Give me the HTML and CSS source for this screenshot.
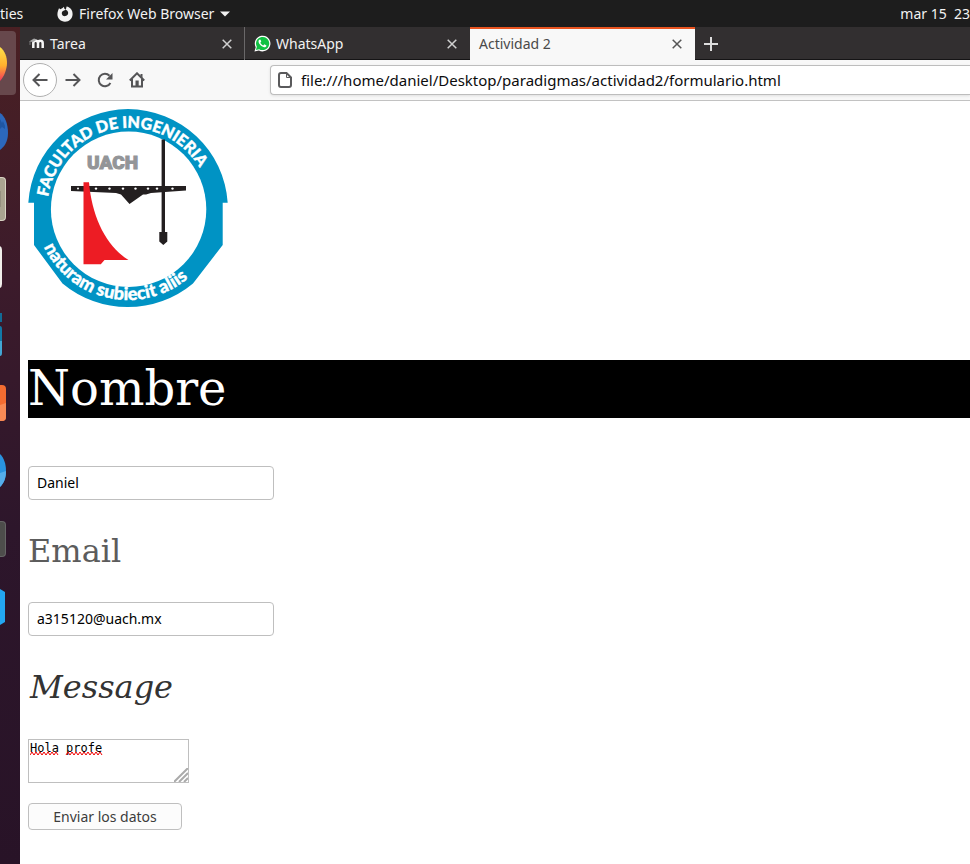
FILE: index.html
```html
<!DOCTYPE html>
<html lang="es">
<head>
<meta charset="utf-8">
<title>Actividad 2</title>
<link rel="stylesheet" href="styles.css">
</head>
<body>
<header class="topbar">
  <span class="activities">ties</span>
  <button class="app-menu" type="button">
    <svg width="16" height="16" viewBox="0 0 16 16" aria-hidden="true"><path fill="#f2f2f2" d="M1.2 4.2 2 2.2l1.4 1L5.6 2 7 .8l.2 1.7 1.6 1.3-2.3.9c-1.3.6-2 1.800-1.600 3.200.4 1.700 2 2.500 3.600 2.200 1.900-.3 3-2 2.600-3.800-.3-1.400-1.200-2.100-2.300-2.600L9.600 .6C13.300 1.200 15.700 4.300 15.600 8.200 15.500 12.500 12.200 15.700 8 15.700S.4 12.500.4 8.300c0-1.500.3-2.800.8-4.100z"/></svg>
    <span>Firefox Web Browser</span>
    <svg width="10" height="6" viewBox="0 0 10 6" aria-hidden="true"><path fill="#f2f2f2" d="M0 .5h10L5 5.500z"/></svg>
  </button>
  <span class="clock">mar 15&nbsp; 23</span>
</header>
<div class="desktop">
  <nav class="dock" aria-label="Dock">
    <button class="slot active" type="button" aria-label="Firefox"><svg viewBox="0 0 16 64"><defs><linearGradient id="fx" x1="0" y1="0" x2="0" y2="1"><stop offset="0" stop-color="#ffe14a"/><stop offset=".55" stop-color="#ffb02e"/><stop offset="1" stop-color="#f5365c"/></linearGradient></defs><path fill="url(#fx)" d="M0 16c5 4 7 10 7 16S4 46 0 50z"/></svg></button>
    <button class="slot" type="button" aria-label="Thunderbird"><svg viewBox="0 0 16 64"><path fill="#2c68bd" d="M0 14c5 3 8 11 8 20S4 48 0 51z"/><path fill="#1f56a3" d="M0 20l2 4 1-2 2 5v3l-3-2-2 2z"/></svg></button>
    <button class="slot" type="button" aria-label="Archivos"><svg viewBox="0 0 16 64"><path fill="#d8d3c3" d="M0 10h2q4 0 4 4v36q0 4-4 4H0z"/><path fill="#aaa491" d="M0 11h2q3 0 3 3v36q0 3-3 3H0z"/><path fill="#969080" d="M0 24h1v16H0z"/></svg></button>
    <button class="slot" type="button" aria-label="Rhythmbox"><svg viewBox="0 0 16 64"><path fill="#f1efeb" d="M0 11q2 1 2 4v34q0 3-2 4z"/></svg></button>
    <button class="slot" type="button" aria-label="Writer"><svg viewBox="0 0 16 64"><path fill="#126b96" d="M0 10h2v9H0z"/><path fill="#1279a8" d="M0 23q2 0 2 3v13H0z"/><path fill="#42a6d4" d="M0 38h2v12q0 3-2 3z"/></svg></button>
    <button class="slot" type="button" aria-label="Software"><svg viewBox="0 0 16 64"><path fill="#f36c31" d="M0 14h2q4 0 4 4v28q0 4-4 4H0z"/><path fill="#f78a55" d="M0 34l6-2v14q0 4-4 4H0z"/></svg></button>
    <button class="slot" type="button" aria-label="Ayuda"><svg viewBox="0 0 16 64"><path fill="#2993df" d="M0 15c4 4 6 10 6 17s-2 12-6 16z"/><path fill="#55adea" d="M0 34l6-2c0 7-2 12-6 16z"/></svg></button>
    <button class="slot" type="button" aria-label="Terminal"><svg viewBox="0 0 16 64"><path fill="#666" d="M0 14h2q4 0 4 4v28q0 4-4 4H0z"/><path fill="#4d4d4b" d="M0 15h2q3 0 3 3v28q0 3-3 3H0z"/></svg></button>
    <button class="slot" type="button" aria-label="Visual Studio Code"><svg viewBox="0 0 16 64"><path fill="#23a7f2" d="M0 14l5 3v30l-5 3z"/></svg></button>
  </nav>
  <div class="browser">
    <div class="tabs">
      <div class="tab">
        <svg class="favicon" width="16" height="16" viewBox="0 0 16 16" aria-hidden="true"><path fill="none" stroke="#f5f5f5" stroke-width="2.500" d="M4.300 12V7.200c0-3.200 4.700-3.200 4.700 0V12M9 7.200c0-3.200 4.700-3.200 4.700 0V12"/><path fill="#aaa" d="M0 5.500 5 2.500l3 1-4 2.500z"/><path stroke="#777" d="M1 5.500V9"/></svg>
        <button class="tab-title" type="button">Tarea</button>
        <button class="close" type="button" aria-label="Cerrar Tarea"><svg width="10" height="10" viewBox="0 0 10 10"><path d="M.7.7l8.600 8.600M9.300.7.7 9.300"/></svg></button>
      </div>
      <div class="tab">
        <svg class="favicon" width="17" height="17" viewBox="0 0 18 18" aria-hidden="true"><path fill="#fff" d="M.5 17.500l1.300-4.500A8.300 8.300 0 1 1 5.200 16.400z"/><path fill="#10c143" d="M2 16l1-3.600A7 7 0 1 1 5.500 15z"/><path fill="#fff" d="M6.300 4.800c-.7 0-1.600.9-1.500 2.200.2 2.700 3.400 5.800 6.200 6 1.200 0 2.300-.9 2.200-2l-2.200-1.200-1.200 1.300c-1.500-.6-2.500-1.600-3.100-2.900l1-1.200-.8-2.100z"/></svg>
        <button class="tab-title" type="button">WhatsApp</button>
        <button class="close" type="button" aria-label="Cerrar WhatsApp"><svg width="10" height="10" viewBox="0 0 10 10"><path d="M.7.7l8.600 8.600M9.300.7.7 9.300"/></svg></button>
      </div>
      <div class="tab current">
        <button class="tab-title" type="button">Actividad 2</button>
        <button class="close" type="button" aria-label="Cerrar Actividad 2"><svg width="10" height="10" viewBox="0 0 10 10"><path d="M.7.7l8.600 8.600M9.300.7.7 9.300"/></svg></button>
      </div>
      <button class="new-tab" type="button" aria-label="Nueva pestaña"><svg width="14" height="14" viewBox="0 0 14 14"><path stroke="#ddd" stroke-width="2" d="M7 0v14M0 7h14"/></svg></button>
    </div>
    <div class="toolbar">
      <button class="tool back" type="button" aria-label="Atrás"><svg width="16" height="16" viewBox="0 0 16 16"><path d="M15.500 8H1.500M7.500 2 1.500 8l6 6"/></svg></button>
      <button class="tool" type="button" aria-label="Adelante"><svg width="16" height="16" viewBox="0 0 16 16"><path d="M.5 8h14M8.500 2l6 6-6 6"/></svg></button>
      <button class="tool" type="button" aria-label="Recargar"><svg width="16" height="16" viewBox="0 0 16 16"><path d="M13.400 11A6.200 6.200 0 1 1 12.500 3.800"/><path class="solid" d="M15.500 1v6.500H9z"/></svg></button>
      <button class="tool" type="button" aria-label="Inicio"><svg width="16" height="16" viewBox="0 0 16 16"><path d="M.8 8.500 8 1.300l7.200 7.200M3 7v7.500h10V7"/><path class="solid" d="M6.500 8.500h3.200v5.500H6.500z"/><path class="solid" d="M11.500 2h2v4l-2-2z"/></svg></button>
      <div class="urlbar">
        <svg width="14" height="16" viewBox="0 0 14 16" aria-hidden="true"><path fill="none" stroke="#5a5a5c" stroke-width="2" d="M3 1h5.500L13 5.500V13a2 2 0 0 1-2 2H3a2 2 0 0 1-2-2V3a2 2 0 0 1 2-2z"/><path fill="none" stroke="#5a5a5c" stroke-width="1" d="M8.500 1v4.500H13"/></svg>
        <input type="text" aria-label="Dirección" value="file:///home/daniel/Desktop/paradigmas/actividad2/formulario.html">
      </div>
    </div>
    <main class="page">
      <svg class="logo" width="200" height="200" viewBox="0 0 200 200" role="img" aria-label="Facultad de Ingeniería UACH">
        <defs>
          <path id="arc-top" d="M20 88A82 82 0 0 1 182 88"/>
          <path id="arc-bottom" d="M16 138A93 93 0 0 0 184 138"/>
        </defs>
        <path fill="#0093c4" d="M.3 93.700A99.900 99.900 0 0 1 199.700 93.700H194.700V136L165 174.500A102 102 0 0 1 34.500 174.500L6 136V93.700z"/>
        <circle cx="100.600" cy="100.300" r="77.700" fill="#fff"/>
        <path fill="#231f20" d="M133.600 30.500h3.400V123h2.300v9.500l-4 3.500-4-3.500V123h2.300z"/>
        <path fill="#231f20" d="M43 77h115v4.500l-35 2.500-5 1.500h-3l-13.500 9.500L93 85.500 88 84l-45-2z"/>
        <g fill="#fff"><circle cx="68" cy="79.600" r="1.200"/><circle cx="81.500" cy="79.600" r="1.200"/><circle cx="95" cy="79.600" r="1.200"/><circle cx="107.500" cy="79.600" r="1.200"/><circle cx="120" cy="79.600" r="1.200"/><circle cx="129" cy="79.600" r="1.200"/><circle cx="144.500" cy="79.600" r="1.200"/><circle cx="50" cy="79.600" r="1"/></g>
        <path fill="#ed1c24" d="M55.500 73.300h5.500C64 108 78 137 100.500 151H76.500l-3.700 4.300H55.500z"/>
        <text class="uach" x="59" y="60">UACH</text>
        <text class="motto"><textPath href="#arc-top">FACULTAD DE INGENIERIA</textPath></text>
        <text class="motto latin"><textPath href="#arc-bottom">naturam subiecit aliis</textPath></text>
      </svg>
      <form>
        <p class="nombre"><label for="nombre">Nombre</label></p>
        <input class="field" id="nombre" type="text" value="Daniel">
        <p class="email"><label for="email">Email</label></p>
        <input class="field" id="email" type="email" value="a315120@uach.mx">
        <p class="message"><label for="message">Message</label></p>
        <div class="message-box">
          <textarea id="message" spellcheck="false">Hola profe</textarea>
          <svg class="squiggle" width="73" height="5" viewBox="0 0 73 5" aria-hidden="true"><path d="M0 4l2-3 2 3 2-3 2 3 2-3 2 3 2-3 2 3 2-3 2 3 2-3 2 3 2-3 2 3M36 4l2-3 2 3 2-3 2 3 2-3 2 3 2-3 2 3 2-3 2 3 2-3 2 3 2-3 2 3 2-3 2 3 2-3 2 3"/></svg>
          <svg class="grip" width="14" height="14" viewBox="0 0 14 14" aria-hidden="true"><path d="M0 14 14 0M5 14l9-9M10 14l4-4"/></svg>
        </div>
        <button class="submit" type="button">Enviar los datos</button>
      </form>
    </main>
  </div>
</div>
</body>
</html>
```
FILE: styles.css
```css
* { box-sizing: border-box; }

body {
  margin: 0;
  min-height: 100vh;
  display: flex;
  flex-direction: column;
  overflow-x: hidden;
  background: #fff;
  font-family: "Noto Sans", sans-serif;
  font-size: 14px;
}

button {
  margin: 0;
  padding: 0;
  border: 0;
  background: none;
  color: inherit;
  font: inherit;
}

svg { display: block; flex: none; }

.topbar {
  display: flex;
  align-items: center;
  height: 27px;
  background: #1d1d1d;
  color: #f2f2f2;
  white-space: nowrap;
}

.activities { width: 57px; }

.app-menu {
  display: flex;
  align-items: center;
  gap: 6px;
}

.clock { margin-left: auto; }

.desktop {
  flex: 1;
  display: flex;
}

.dock {
  flex: none;
  display: flex;
  flex-direction: column;
  gap: 4px;
  width: 20px;
  padding-top: 4px;
  background: linear-gradient(#4a2023, #3c1b2b 30%, #2d162b 60%, #281327);
}

.slot {
  width: 16px;
  height: 64px;
}

.slot svg {
  width: 16px;
  height: 64px;
}

.active {
  border-radius: 0 4px 4px 0;
  background: #67484c;
}

.browser {
  flex: 1;
  min-width: 0;
  display: flex;
  flex-direction: column;
}

.tabs {
  display: flex;
  height: 33px;
  background: #322f30;
  box-shadow: inset 0 -1px #151415;
  color: #f2f2f2;
}

.tab {
  flex: 0 1 225px;
  display: flex;
  align-items: center;
  gap: 5px;
  padding: 0 13px 0 9px;
}

.tab:first-child { border-right: 1px solid #6a6869; padding-right: 12px; }

.tab-title {
  flex: 1;
  text-align: left;
}

.close svg {
  fill: none;
  stroke: #d0d0d0;
  stroke-width: 1.5;
}

.current {
  background: #f8f8f8;
  box-shadow: inset 0 2px #e95420;
  color: #4a4a4a;
}

.current .close svg { stroke: #555; }

.new-tab { padding: 0 9px; }

.toolbar {
  display: flex;
  align-items: center;
  height: 41px;
  padding-left: 3px;
  border-bottom: 1px solid #c2c2c2;
  background: #f8f8f8;
}

.tool {
  display: grid;
  place-items: center;
  width: 32px;
  height: 34px;
}

.tool svg {
  fill: none;
  stroke: #555557;
  stroke-width: 2;
}

.tool .solid {
  fill: #555557;
  stroke: none;
}

.back {
  width: 34px;
  border: 1px solid #b0b0b0;
  border-radius: 50%;
  background: #fff;
}

.urlbar {
  flex: 1;
  display: flex;
  align-items: center;
  gap: 9px;
  height: 30px;
  margin-left: 117px;
  padding-left: 7px;
  border: 1px solid #bdbdbd;
  border-right: 0;
  border-radius: 4px 0 0 4px;
  background: #fff;
  box-shadow: 0 1px 3px #0000001a;
}

.urlbar input {
  flex: 1;
  min-width: 0;
  padding: 0;
  border: 0;
  outline: 0;
  background: none;
  color: #0c0c0d;
  font: inherit;
  font-size: 15px;
}

.page {
  flex: 1;
  padding: 8px 0 8px 8px;
  background: #fff;
}

.motto {
  fill: #fff;
  stroke: #fff;
  stroke-width: 0.4;
  font-family: Lato, sans-serif;
  font-size: 16px;
  font-weight: 900;
}

.latin { font-size: 18px; }

.uach {
  fill: #939598;
  stroke: #939598;
  font-family: Roboto, sans-serif;
  font-size: 19px;
  font-weight: 900;
}

.page p { font-family: "DejaVu Serif", serif; }

.nombre {
  margin: 51px 0 48px;
  padding-bottom: 2px;
  background: #000;
  color: #fff;
  font-size: 48px;
  line-height: 56px;
}

.email, .message {
  margin: 32px 0;
  font-size: 32px;
  line-height: 38px;
}

.email { color: #5c5c5c; }

.message {
  padding-left: 2px;
  color: #333;
  font-style: italic;
}

.field {
  display: block;
  width: 246px;
  height: 34px;
  padding: 0 8px 2px;
  border: 1px solid #bfbfbf;
  border-radius: 4px;
  background: #fff;
  color: #000;
  font: inherit;
}

.message-box {
  position: relative;
  width: 161px;
  margin: 33px 0 20px;
}

.message-box textarea {
  display: block;
  width: 100%;
  height: 44px;
  padding: 1px;
  border: 1px solid #bfbfbf;
  outline: 0;
  resize: none;
  color: #000;
  font: 12px/14px "DejaVu Sans Mono", monospace;
}

.squiggle {
  position: absolute;
  top: 12px;
  left: 2px;
  fill: none;
  stroke: #f00000;
}

.grip {
  position: absolute;
  right: 1px;
  bottom: 1px;
  fill: none;
  stroke: #aaa;
  stroke-width: 2;
}

.submit {
  width: 154px;
  height: 27px;
  border: 1px solid #bfbfbf;
  border-radius: 4px;
  background: #fcfcfc;
  color: #3d3d3d;
}
```
